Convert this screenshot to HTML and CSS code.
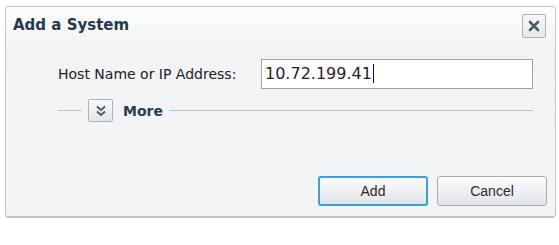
FILE: index.html
```html
<!DOCTYPE html>
<html lang="en">
  <head>
    <meta charset="UTF-8" />
    <title>Add a System</title>
    <link rel="stylesheet" href="styles.css">
  </head>
  <body>
    <div class="dialog">
      <div class="dialog-header">
        <h1>Add a System</h1>
        <button class="close-btn" aria-label="Close">
          <svg width="12" height="12" viewBox="0 0 12 12">
            <path d="M2 2 L10 10 M10 2 L2 10" stroke="#4d5b6b" stroke-width="2.6" stroke-linecap="round" />
          </svg>
        </button>
      </div>

      <div class="dialog-body">
        <div class="field">
          <label for="hostName">Host Name or IP Address:</label>
          <div class="input-box" id="hostName">10.72.199.41<span class="caret"></span></div>
        </div>

        <div class="more">
          <span class="rule short"></span>
          <span class="more-toggle">
            <svg width="14" height="14" viewBox="0 0 14 14">
              <path d="M3 2.5 L7 6 L11 2.5 M3 7.5 L7 11 L11 7.5" fill="none" stroke="#4d5b6b" stroke-width="2" />
            </svg>
          </span>
          <span class="more-label">More</span>
          <span class="rule"></span>
        </div>
      </div>

      <div class="dialog-footer">
        <button class="btn btn-default">Add</button>
        <button class="btn">Cancel</button>
      </div>
    </div>
  </body>
</html>
```

FILE: styles.css
```css
body {
  background-color: #fff;
  margin: 0;
  padding: 6px 3px 0 5px;
  font-family: "DejaVu Sans", Verdana, sans-serif;
}

.dialog {
  background: linear-gradient(to bottom, #fdfdfe 0, #f1f3f5 40px, #f2f4f6 100%);
  border: 1px solid #c3c7cc;
  border-bottom: 2px solid #c0c4c8;
  border-radius: 4px;
  box-sizing: border-box;
  display: flex;
  flex-direction: column;
  height: 212px;
  width: 551px;
}

.dialog-header {
  align-items: center;
  display: flex;
  justify-content: space-between;
  padding: 7px 9px 0 7px;
}

.dialog-header h1 {
  color: #27384a;
  font-size: 15px;
  font-weight: bold;
  margin: 0 0 2px;
}

.close-btn {
  align-items: center;
  background: linear-gradient(to bottom, #f7f8f9, #e6e9ec);
  border: 1px solid #a9b1b9;
  border-radius: 2px;
  display: flex;
  height: 24px;
  justify-content: center;
  padding: 0;
  width: 24px;
}

.dialog-body {
  flex: 1;
  padding: 21px 22px 0 52px;
}

.field {
  align-items: center;
  display: flex;
}

.field label {
  color: #222;
  font-size: 14px;
  width: 203px;
}

.input-box {
  background-color: #fff;
  border: 1px solid #9aa3ac;
  box-sizing: border-box;
  color: #2a1a2e;
  font-size: 16px;
  height: 30px;
  line-height: 28px;
  padding-left: 3px;
  width: 272px;
}

.caret {
  border-left: 1px solid #111;
  display: inline-block;
  height: 19px;
  margin-left: 1px;
  vertical-align: -4px;
}

.more {
  align-items: center;
  display: flex;
  margin-top: 10px;
}

.rule {
  border-top: 1px solid #bcc3ca;
  flex: 1;
}

.rule.short {
  flex: none;
  width: 24px;
}

.more-toggle {
  align-items: center;
  background: linear-gradient(to bottom, #f8f9fa, #e3e7eb);
  border: 1px solid #a9b1b9;
  border-radius: 2px;
  box-sizing: border-box;
  display: flex;
  height: 23px;
  justify-content: center;
  margin-left: 6px;
  width: 25px;
}

.more-label {
  color: #2b3d52;
  font-size: 14px;
  font-weight: bold;
  margin: 0 6px 0 10px;
}

.dialog-footer {
  display: flex;
  gap: 9px;
  justify-content: flex-end;
  padding: 0 8px 10px 0;
}

.btn {
  background: linear-gradient(to bottom, #fbfbfc, #e1e4e7);
  border: 1px solid #a5acb3;
  border-radius: 3px;
  color: #2b2b2b;
  font-family: "Liberation Sans", Arial, sans-serif;
  font-size: 14px;
  height: 30px;
  width: 110px;
}

.btn-default {
  border: 2px solid #3a9fdc;
}
```
